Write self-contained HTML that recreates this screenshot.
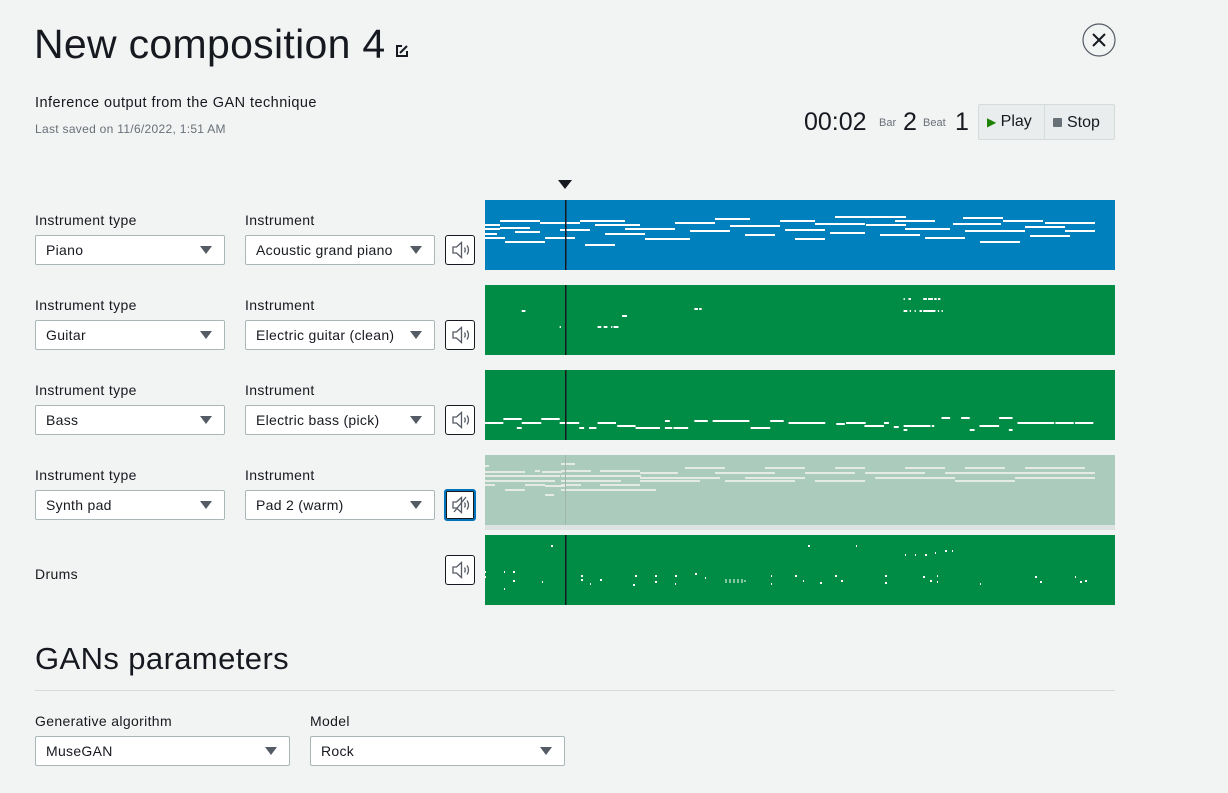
<!DOCTYPE html>
<html><head><meta charset="utf-8">
<style>
*{box-sizing:border-box;margin:0;padding:0}
body{width:1228px;height:793px;background:#f2f3f3;font-family:"Liberation Sans",sans-serif;color:#16191f;position:relative;overflow:hidden}
.a{position:absolute}
h1{position:absolute;left:34px;top:21px;font-size:41px;font-weight:400;letter-spacing:0.3px}
.lbl{position:absolute;font-size:14px;color:#16191f;letter-spacing:0.35px}
.sel{position:absolute;height:30px;background:#fff;border:1px solid #aab7b8;border-radius:2px;font-size:14px;padding:0 10px;line-height:28px;letter-spacing:0.3px}
.sel:after{content:"";position:absolute;right:12px;top:10px;border-left:6px solid transparent;border-right:6px solid transparent;border-top:8px solid #545b64}
.mb{position:absolute;width:30px;height:30px;border:1px solid #16191f;border-radius:3px;background:#fff}
.tr{position:absolute;left:485px;width:630px;height:70px}
</style></head><body>
<h1>New composition 4</h1>
<svg class="a" style="left:395px;top:44px" width="14" height="14" viewBox="0 0 14 14"><path d="M7 2H2v10h10V7" fill="none" stroke="#16191f" stroke-width="2"/><path d="M5 9l7-7" stroke="#16191f" stroke-width="2"/></svg>
<svg class="a" style="left:1082px;top:23px" width="34" height="34" viewBox="0 0 34 34"><circle cx="17" cy="17" r="16" fill="none" stroke="#545b64" stroke-width="1.2"/><path d="M11 11l12 12M23 11L11 23" stroke="#16191f" stroke-width="2"/></svg>
<div class="a" style="left:35px;top:95px;font-size:14.5px;letter-spacing:0.45px">Inference output from the GAN technique</div>
<div class="a" style="left:35px;top:122px;font-size:12px;color:#687078;letter-spacing:0.3px">Last saved on 11/6/2022, 1:51 AM</div>
<div class="a" style="left:804px;top:108px;font-size:25px;font-weight:300;color:#16191f">00:02</div>
<div class="a" style="left:879px;top:117px;font-size:11px;color:#687078">Bar</div>
<div class="a" style="left:903px;top:108px;font-size:25px;font-weight:300">2</div>
<div class="a" style="left:923px;top:117px;font-size:11px;color:#687078">Beat</div>
<div class="a" style="left:955px;top:108px;font-size:25px;font-weight:300">1</div>
<div class="a" style="left:978px;top:104px;width:137px;height:36px;border:1px solid #d5dbdb;background:#eaeded;border-radius:2px"></div>
<div class="a" style="left:1044px;top:105px;width:1px;height:34px;background:#d5dbdb"></div>
<div class="a" style="left:987px;top:113px;font-size:16px"><span style="color:#1d8102;font-size:12px">&#9654;</span> Play</div>
<div class="a" style="left:1053px;top:114px;font-size:16px"><span style="display:inline-block;width:9px;height:9px;background:#687078;border-radius:1px;margin-right:5px"></span>Stop</div>
<div class="a" style="left:558px;top:180px;border-left:7px solid transparent;border-right:7px solid transparent;border-top:9px solid #16191f"></div>

<div class="lbl" style="left:35px;top:212px">Instrument type</div><div class="lbl" style="left:245px;top:212px">Instrument</div>
<div class="sel" style="left:35px;top:235px;width:190px">Piano</div><div class="sel" style="left:245px;top:235px;width:190px">Acoustic grand piano</div>
<div class="lbl" style="left:35px;top:297px">Instrument type</div><div class="lbl" style="left:245px;top:297px">Instrument</div>
<div class="sel" style="left:35px;top:320px;width:190px">Guitar</div><div class="sel" style="left:245px;top:320px;width:190px">Electric guitar (clean)</div>
<div class="lbl" style="left:35px;top:382px">Instrument type</div><div class="lbl" style="left:245px;top:382px">Instrument</div>
<div class="sel" style="left:35px;top:405px;width:190px">Bass</div><div class="sel" style="left:245px;top:405px;width:190px">Electric bass (pick)</div>
<div class="lbl" style="left:35px;top:467px">Instrument type</div><div class="lbl" style="left:245px;top:467px">Instrument</div>
<div class="sel" style="left:35px;top:490px;width:190px">Synth pad</div><div class="sel" style="left:245px;top:490px;width:190px">Pad 2 (warm)</div>
<div class="lbl" style="left:35px;top:566px">Drums</div>

<svg width="0" height="0" style="position:absolute"><defs><g id="spk"><path d="M7 11h3.5l5-4.5v15l-5-4.5H7z" fill="none" stroke="#545b64" stroke-width="1.3"/><path d="M18.5 11.5q1.5 2.5 0 5M21 9.5q3 4.5 0 9" fill="none" stroke="#545b64" stroke-width="1.3"/></g></defs></svg>
<div class="mb" style="left:445px;top:235px"><svg width="28" height="28" viewBox="0 0 28 28"><use href="#spk"/></svg></div>
<div class="mb" style="left:445px;top:320px"><svg width="28" height="28" viewBox="0 0 28 28"><use href="#spk"/></svg></div>
<div class="mb" style="left:445px;top:405px"><svg width="28" height="28" viewBox="0 0 28 28"><use href="#spk"/></svg></div>
<div class="mb" style="left:444px;top:489px;width:32px;height:32px;border:2px solid #0073bb;box-shadow:0 0 0 1px #16191f inset"><svg width="28" height="28" viewBox="0 0 28 28"><use href="#spk"/><path d="M8 21L20 6" stroke="#545b64" stroke-width="1.3"/></svg></div>
<div class="mb" style="left:445px;top:555px"><svg width="28" height="28" viewBox="0 0 28 28"><use href="#spk"/></svg></div>

<svg class="tr" style="top:200px;background:#0080bc" viewBox="0 0 630 70" fill="#fff">
<rect x="0" y="24" width="15" height="2"/><rect x="0" y="28" width="15" height="2"/><rect x="0" y="33" width="12" height="2"/><rect x="0" y="37" width="20" height="2"/>
<rect x="15" y="20" width="40" height="2"/><rect x="15" y="27" width="30" height="2"/><rect x="20" y="41" width="40" height="2"/><rect x="30" y="31" width="25" height="2"/>
<rect x="55" y="22" width="40" height="2"/><rect x="60" y="37" width="30" height="2"/><rect x="75" y="29" width="30" height="2"/><rect x="95" y="20" width="45" height="2"/>
<rect x="100" y="44" width="30" height="2"/><rect x="110" y="24" width="45" height="2"/><rect x="120" y="33" width="40" height="2"/><rect x="140" y="28" width="50" height="2"/>
<rect x="160" y="38" width="45" height="2"/><rect x="190" y="22" width="40" height="2"/><rect x="205" y="30" width="40" height="2"/><rect x="230" y="18" width="35" height="2"/>
<rect x="245" y="25" width="50" height="2"/><rect x="260" y="34" width="30" height="2"/><rect x="295" y="20" width="35" height="2"/><rect x="300" y="29" width="40" height="2"/>
<rect x="310" y="38" width="30" height="2"/><rect x="330" y="23" width="50" height="2"/><rect x="345" y="32" width="35" height="2"/><rect x="350" y="16" width="40" height="2"/>
<rect x="381" y="16" width="40" height="2"/><rect x="381" y="24" width="40" height="2"/><rect x="395" y="34" width="40" height="2"/><rect x="410" y="20" width="40" height="2"/>
<rect x="420" y="28" width="45" height="2"/><rect x="440" y="37" width="40" height="2"/><rect x="468" y="23" width="48" height="2"/><rect x="478" y="17" width="40" height="2"/>
<rect x="480" y="30" width="60" height="2"/><rect x="495" y="41" width="40" height="2"/><rect x="518" y="20" width="40" height="2"/><rect x="540" y="26" width="40" height="2"/>
<rect x="545" y="35" width="40" height="2"/><rect x="560" y="22" width="50" height="2"/><rect x="580" y="30" width="30" height="2"/>
<rect x="80" y="0" width="1.5" height="70" fill="#16191f"/></svg>

<svg class="tr" style="top:285px;background:#008c44" viewBox="0 0 630 70" fill="#fff"><g transform="scale(1.224,1)">
<rect x="30" y="25" width="3" height="2"/><rect x="61" y="41" width="1" height="2"/><rect x="92" y="41" width="3" height="2"/><rect x="97" y="41" width="3" height="2"/><rect x="103" y="41" width="1" height="2"/><rect x="105" y="41" width="4" height="2"/>
<rect x="112" y="30" width="4" height="2"/><rect x="171" y="23" width="3" height="2"/><rect x="175" y="23" width="2" height="2"/>
<rect x="342" y="13" width="1" height="2"/><rect x="346" y="13" width="2" height="2"/><rect x="358" y="13" width="3" height="2"/><rect x="362" y="13" width="4" height="2"/><rect x="367" y="13" width="2" height="2"/><rect x="370" y="13" width="2" height="2"/>
<rect x="342" y="25" width="3" height="2"/><rect x="347" y="25" width="1" height="2"/><rect x="351" y="25" width="1" height="2"/><rect x="355" y="25" width="2" height="2"/><rect x="358" y="25" width="10" height="2"/><rect x="370" y="25" width="1" height="2"/><rect x="373" y="25" width="1" height="2"/></g>
<rect x="80" y="0" width="1.5" height="70" fill="#16191f"/></svg>

<svg class="tr" style="top:370px;background:#008c44" viewBox="0 0 630 70" fill="#fff"><g transform="scale(1.224,1)">
<rect x="0" y="52" width="15" height="2"/><rect x="15" y="48" width="15" height="2"/><rect x="30" y="52" width="16" height="2"/><rect x="26" y="57" width="4" height="2"/><rect x="46" y="48" width="15" height="2"/><rect x="61" y="52" width="16" height="2"/><rect x="77" y="57" width="4" height="2"/><rect x="85" y="57" width="6" height="2"/><rect x="92" y="52" width="15" height="2"/><rect x="108" y="55" width="15" height="2"/><rect x="123" y="57" width="20" height="2"/><rect x="147" y="50" width="4" height="2"/><rect x="147" y="57" width="6" height="2"/><rect x="154" y="57" width="12" height="2"/><rect x="171" y="50" width="11" height="2"/><rect x="186" y="50" width="30" height="2"/><rect x="217" y="57" width="16" height="2"/><rect x="233" y="50" width="11" height="2"/><rect x="248" y="52" width="30" height="2"/><rect x="287" y="53" width="7" height="2"/><rect x="295" y="52" width="16" height="2"/><rect x="310" y="55" width="16" height="2"/><rect x="326" y="52" width="4" height="2"/><rect x="334" y="56" width="4" height="2"/><rect x="342" y="55" width="22" height="2"/><rect x="342" y="59" width="3" height="2"/><rect x="365" y="55" width="2" height="2"/><rect x="373" y="47" width="7" height="2"/><rect x="389" y="47" width="7" height="2"/><rect x="396" y="59" width="4" height="2"/><rect x="404" y="55" width="16" height="2"/><rect x="420" y="47" width="11" height="2"/><rect x="428" y="59" width="3" height="2"/><rect x="435" y="52" width="30" height="2"/><rect x="466" y="52" width="15" height="2"/><rect x="482" y="52" width="15" height="2"/></g>
<rect x="80" y="0" width="1.5" height="70" fill="#16191f"/></svg>

<div class="a" style="left:485px;top:455px;width:630px;height:75px;background:#dde2e2"></div>
<svg class="tr" style="top:455px;background:#abcbbd" viewBox="0 0 630 70" fill="#e4ebe7">
<rect x="0" y="10" width="4" height="2"/><rect x="0" y="16" width="40" height="2"/><rect x="0" y="20" width="75" height="2"/><rect x="0" y="25" width="70" height="2"/><rect x="0" y="29" width="10" height="2"/>
<rect x="20" y="34" width="20" height="2"/><rect x="40" y="29" width="20" height="2"/><rect x="50" y="15" width="5" height="2"/><rect x="57" y="16" width="20" height="2"/><rect x="60" y="30" width="20" height="2"/><rect x="60" y="39" width="9" height="2"/>
<rect x="76" y="8" width="14" height="2"/><rect x="76" y="15" width="30" height="2"/><rect x="76" y="20" width="80" height="2"/><rect x="76" y="25" width="60" height="2"/><rect x="76" y="29" width="20" height="2"/><rect x="76" y="34" width="95" height="2"/>
<rect x="115" y="15" width="40" height="2"/><rect x="115" y="29" width="40" height="2"/><rect x="155" y="17" width="38" height="2"/><rect x="155" y="22" width="80" height="2"/><rect x="155" y="25" width="60" height="2"/>
<rect x="200" y="12" width="40" height="2"/><rect x="230" y="17" width="60" height="2"/><rect x="240" y="25" width="70" height="2"/><rect x="260" y="22" width="60" height="2"/><rect x="280" y="12" width="40" height="2"/>
<rect x="320" y="17" width="50" height="2"/><rect x="330" y="25" width="50" height="2"/><rect x="350" y="12" width="30" height="2"/><rect x="380" y="17" width="60" height="2"/><rect x="390" y="22" width="80" height="2"/><rect x="420" y="12" width="40" height="2"/>
<rect x="460" y="17" width="60" height="2"/><rect x="470" y="25" width="60" height="2"/><rect x="480" y="12" width="40" height="2"/><rect x="520" y="17" width="90" height="2"/><rect x="530" y="22" width="80" height="2"/><rect x="540" y="12" width="60" height="2"/>
<rect x="80" y="0" width="1" height="70" fill="#a0b5ab"/></svg>

<svg class="tr" style="top:535px;background:#008c44" viewBox="0 0 630 70" fill="#fff">
<rect x="66" y="10" width="2" height="2"/><rect x="0" y="36" width="1" height="2"/><rect x="0" y="41" width="1" height="2"/><rect x="19" y="36" width="1" height="2"/><rect x="28" y="36" width="2" height="2"/><rect x="28" y="45" width="2" height="2"/><rect x="19" y="53" width="1" height="2"/><rect x="57" y="46" width="1" height="2"/>
<rect x="96" y="40" width="2" height="2"/><rect x="96" y="44" width="2" height="2"/><rect x="105" y="48" width="1" height="2"/><rect x="115" y="44" width="2" height="2"/><rect x="150" y="40" width="2" height="2"/><rect x="148" y="49" width="2" height="2"/><rect x="170" y="40" width="2" height="2"/><rect x="170" y="46" width="2" height="2"/><rect x="190" y="40" width="2" height="2"/><rect x="190" y="48" width="1" height="2"/><rect x="210" y="38" width="2" height="2"/><rect x="220" y="42" width="1" height="2"/>
<rect x="240" y="45" width="20" height="2" style="fill:none;stroke:#fff;stroke-dasharray:2 2"/><rect x="286" y="40" width="1" height="2"/><rect x="286" y="48" width="1" height="2"/><rect x="310" y="40" width="2" height="2"/><rect x="318" y="45" width="1" height="2"/><rect x="335" y="47" width="2" height="2"/><rect x="350" y="40" width="2" height="2"/><rect x="356" y="45" width="2" height="2"/>
<rect x="323" y="10" width="2" height="2"/><rect x="371" y="10" width="1" height="2"/><rect x="420" y="19" width="1" height="2"/><rect x="430" y="19" width="1" height="2"/><rect x="440" y="19" width="2" height="2"/><rect x="450" y="17" width="1" height="2"/><rect x="460" y="15" width="2" height="2"/><rect x="467" y="15" width="1" height="2"/>
<rect x="400" y="40" width="2" height="2"/><rect x="400" y="47" width="2" height="2"/><rect x="438" y="41" width="2" height="2"/><rect x="445" y="45" width="2" height="2"/><rect x="452" y="40" width="1" height="2"/><rect x="452" y="46" width="1" height="2"/><rect x="495" y="48" width="1" height="2"/><rect x="550" y="41" width="2" height="2"/><rect x="555" y="46" width="2" height="2"/><rect x="590" y="41" width="1" height="2"/><rect x="595" y="46" width="2" height="2"/><rect x="600" y="45" width="2" height="2"/>
<rect x="80" y="0" width="1.5" height="70" fill="#16191f"/></svg>

<div class="a" style="left:35px;top:641px;font-size:31px;font-weight:400;letter-spacing:0.4px">GANs parameters</div>
<div class="a" style="left:35px;top:690px;width:1080px;height:1px;background:#d5dbdb"></div>
<div class="lbl" style="left:35px;top:713px">Generative algorithm</div><div class="lbl" style="left:310px;top:713px">Model</div>
<div class="sel" style="left:35px;top:736px;width:255px">MuseGAN</div><div class="sel" style="left:310px;top:736px;width:255px">Rock</div>
</body></html>
